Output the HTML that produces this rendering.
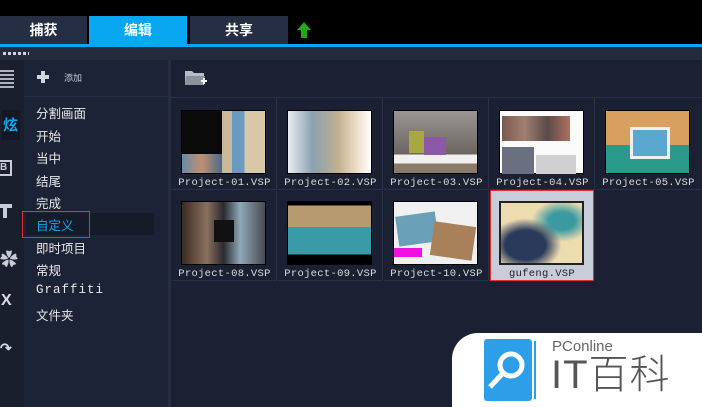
<!DOCTYPE html>
<html><head><meta charset="utf-8"><style>
*{margin:0;padding:0;box-sizing:border-box}
body{width:702px;height:407px;background:#000;position:relative;overflow:hidden;font-family:"Liberation Sans","Noto Sans CJK SC",sans-serif}
.a{position:absolute}
.tab{position:absolute;top:16px;height:28px;color:#fff;font-weight:bold;font-size:14px;text-align:center;line-height:28px;background:#262e44}
.cat{position:absolute;left:36px;color:#e8e8e8;font-size:12.5px}
.cell{position:absolute;width:105px;height:92px;border-right:1px solid #2a3248;border-bottom:1px solid #2a3248}
.th{position:absolute;left:9px;top:12px;width:85px;height:64px;border:1px solid #000}
.lb{position:absolute;left:0;width:105px;top:79px;text-align:center;color:#dcdcdc;font-family:"Liberation Mono","Noto Sans CJK SC",monospace;font-size:10.5px;letter-spacing:0.3px}
</style></head><body>
<div class="tab" style="left:0;width:87px">捕获</div>
<div class="tab" style="left:89px;width:98px;background:#09a6f2">编辑</div>
<div class="tab" style="left:190px;width:98px">共享</div>
<svg class="a" style="left:296px;top:21px" width="16" height="18"><path d="M8 1 L15 9 L11 9 L11 17 L5 17 L5 9 L1 9Z" fill="#22a81c"/></svg>
<div class="a" style="left:0;top:44px;width:702px;height:3px;background:#09a6f2"></div>
<div class="a" style="left:0;top:47px;width:702px;height:13px;background:#222a3c"></div>
<div class="a" style="left:3px;top:52px;width:26px;height:3px;background:repeating-linear-gradient(90deg,#d0d4dc 0 3px,transparent 3px 5px)"></div>
<div class="a" style="left:0;top:60px;width:702px;height:347px;background:#1b2132"></div>
<div class="a" style="left:0;top:60px;width:24px;height:347px;background:#1a1f2d"></div>
<div class="a" style="left:24px;top:60px;width:144px;height:347px;background:#1d2336"></div>
<div class="a" style="left:168px;top:60px;width:3px;height:347px;background:#262d40"></div>
<div class="a" style="left:24px;top:96px;width:144px;height:1px;background:#262d40"></div>
<div class="a" style="left:171px;top:97px;width:531px;height:1px;background:#2a3248"></div>
<!-- left icons -->
<div class="a" style="left:0;top:70px;width:14px;height:18px;background:repeating-linear-gradient(180deg,#c8ccd4 0 2px,transparent 2px 4px);opacity:.85"></div>
<div class="a" style="left:2px;top:110px;width:18px;height:30px;background:#141824"></div>
<div class="a" style="left:3px;top:114px;color:#17a7ef;font-size:15px;font-weight:bold">炫</div>
<div class="a" style="left:0;top:160px;width:12px;height:16px;border:2px solid #c8ccd4;border-left:none;color:#c8ccd4;font-size:10px;line-height:12px;font-weight:bold">B</div>
<div class="a" style="left:0;top:204px;width:12px;height:4px;background:#c8ccd4"></div><div class="a" style="left:3px;top:204px;width:4px;height:14px;background:#c8ccd4"></div>
<div class="a" style="left:0;top:246px;color:#c8ccd4;font-size:18px">✿</div>
<div class="a" style="left:1px;top:292px;color:#d8dce4;font-size:16px;font-weight:bold">X</div>
<div class="a" style="left:0;top:340px;color:#d8dce4;font-size:14px;font-weight:bold">↷</div>
<!-- categories -->
<div class="a" style="left:37px;top:75px;width:12px;height:4px;background:#d0d4dc"></div><div class="a" style="left:41px;top:71px;width:4px;height:12px;background:#d0d4dc"></div>
<div class="a" style="left:64px;top:71px;color:#c8ccd4;font-size:9px">添加</div>
<div class="cat" style="top:103px">分割画面</div>
<div class="cat" style="top:126px">开始</div>
<div class="cat" style="top:148px">当中</div>
<div class="cat" style="top:171px">结尾</div>
<div class="cat" style="top:193px">完成</div>
<div class="a" style="left:26px;top:213px;width:128px;height:22px;background:#161b29"></div>
<div class="a" style="left:22px;top:211px;width:68px;height:27px;border:1px solid #e03030"></div>
<div class="cat" style="top:215px;color:#12a4f0">自定义</div>
<div class="cat" style="top:238px">即时项目</div>
<div class="cat" style="top:260px">常规</div>
<div class="cat" style="top:283px;font-family:'Liberation Mono',monospace;letter-spacing:1px">Graffiti</div>
<div class="cat" style="top:305px">文件夹</div>
<!-- folder icon -->
<svg class="a" style="left:184px;top:68px" width="24" height="20"><path d="M1 3h7l2 2h10v12H1z" fill="#b8bcc6"/><path d="M2 8h19l-2 9H1z" fill="#8c919c"/><path d="M17 13h6M20 10v6" stroke="#fff" stroke-width="2"/></svg>
<!-- grid -->
<div class="cell" style="left:172px;top:98px"><div class="th" style="background:linear-gradient(90deg,#0a0a0a 0 48%,#c9b99a 48% 60%,#6b9ac0 60% 75%,#d8c8a8 75%)"><div class="a" style="left:0;bottom:0;width:48%;height:30%;background:linear-gradient(90deg,#6a8aa8,#c09070,#4a6a8a)"></div></div><div class="lb">Project-01.VSP</div></div>
<div class="cell" style="left:278px;top:98px"><div class="th" style="background:linear-gradient(90deg,#e8ecf0,#8aa0b0 30%,#c0b090 60%,#e8d8c0 80%,#fff)"></div><div class="lb">Project-02.VSP</div></div>
<div class="cell" style="left:384px;top:98px"><div class="th" style="background:linear-gradient(180deg,#9a9590,#6a6560 70%,#f0f0f0 70% 85%,#8a7a6a 85%)"><div class="a" style="left:30px;top:26px;width:22px;height:18px;background:#8a5aa8"></div><div class="a" style="left:15px;top:20px;width:15px;height:22px;background:#a8a840"></div></div><div class="lb">Project-03.VSP</div></div>
<div class="cell" style="left:490px;top:98px"><div class="th" style="background:#fafafa"><div class="a" style="left:2px;top:5px;width:68px;height:25px;background:linear-gradient(90deg,#7a5a50,#a08070,#5a4a4a,#b07060)"></div><div class="a" style="left:2px;top:36px;width:32px;height:27px;background:#6a7080"></div><div class="a" style="left:36px;top:44px;width:40px;height:19px;background:#d0d0d0"></div></div><div class="lb">Project-04.VSP</div></div>
<div class="cell" style="left:596px;top:98px;border-right:none"><div class="th" style="background:linear-gradient(180deg,#d8a060 0 55%,#2a9a8a 55%)"><div class="a" style="left:24px;top:16px;width:40px;height:32px;background:#5aa8d0;border:3px solid #f0f0f0"></div></div><div class="lb">Project-05.VSP</div></div>
<div class="cell" style="left:172px;top:191px;height:90px"><div class="th" style="top:10px;background:linear-gradient(90deg,#3a2a20,#8a7060 30%,#2a2a30 50%,#90a8b8 70%,#4a4a50)"><div class="a" style="left:32px;top:18px;width:20px;height:22px;background:#111"></div></div><div class="lb" style="top:77px">Project-08.VSP</div></div>
<div class="cell" style="left:278px;top:191px;height:90px"><div class="th" style="top:10px;background:linear-gradient(180deg,#000 0 6%,#b89a70 6% 40%,#3a9aa8 40% 85%,#000 85%)"></div><div class="lb" style="top:77px">Project-09.VSP</div></div>
<div class="cell" style="left:384px;top:191px;height:90px"><div class="th" style="top:10px;background:#f0f0f0"><div class="a" style="left:3px;top:12px;width:40px;height:30px;background:#6aa0b8;transform:rotate(-8deg)"></div><div class="a" style="left:38px;top:22px;width:42px;height:34px;background:#a8805a;transform:rotate(8deg)"></div><div class="a" style="left:0;top:46px;width:28px;height:9px;background:#f010e0"></div></div><div class="lb" style="top:77px">Project-10.VSP</div></div>
<div class="cell" style="left:490px;top:190px;width:104px;height:91px;background:#c8ccd8;border:1px solid #e03030"><div class="th" style="left:8px;top:10px;border:2px solid #222;background:radial-gradient(ellipse at 30% 70%,#2a3a5a 0 25%,transparent 45%),radial-gradient(ellipse at 75% 30%,#3a9aa0 0 15%,transparent 35%),#ecdcb0"></div><div class="lb" style="top:77px;color:#222;width:102px">gufeng.VSP</div></div>
<!-- watermark -->
<div class="a" style="left:452px;top:333px;width:250px;height:74px;background:#fff;border-top-left-radius:26px"></div>
<div class="a" style="left:484px;top:339px;width:48px;height:62px;background:#2d9ee8;border-radius:3px"></div>
<svg class="a" style="left:484px;top:339px" width="62" height="62"><circle cx="27" cy="26" r="11" fill="none" stroke="#fff" stroke-width="5"/><path d="M19 34 L6 48" stroke="#fff" stroke-width="5"/><path d="M51 2v58" stroke="#2d9ee8" stroke-width="2"/></svg>
<div class="a" style="left:552px;top:338px;color:#666;font-size:15px">PConline</div>
<div class="a" style="left:551px;top:350px;color:#555;font-size:40px;line-height:50px;font-weight:300;letter-spacing:1px">IT百科</div>
</body></html>
